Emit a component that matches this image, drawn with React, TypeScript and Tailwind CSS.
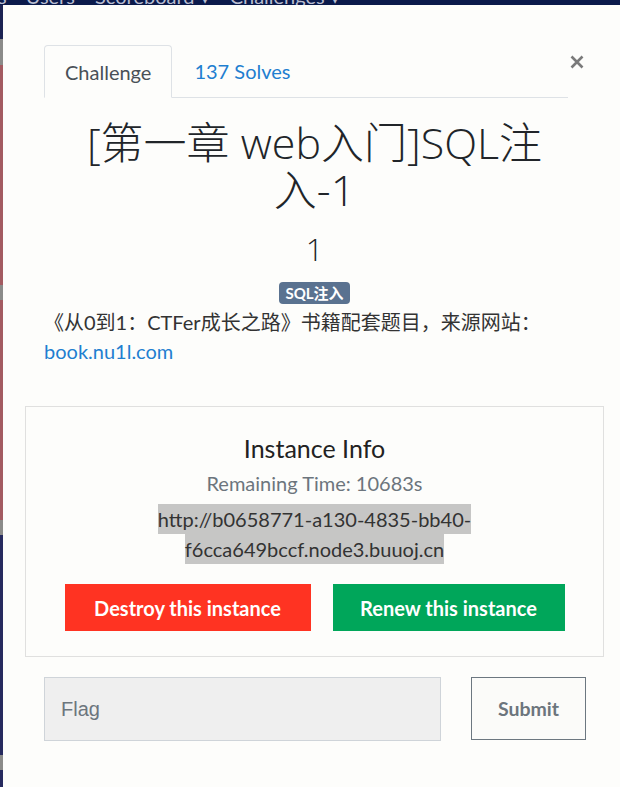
import React from "react";

export default function App() {
  const font = { fontFamily: "Lato, 'Noto Sans CJK SC', sans-serif" };
  const head = { fontFamily: "'Open Sans', 'Noto Sans CJK SC', sans-serif" };
  return (
    <div
      className="w-[620px] h-[787px] flex flex-col bg-[#0b1a4b] overflow-hidden"
      style={font}
    >
      {/* background navbar (mostly covered) */}
      <div className="h-[5px] overflow-hidden shrink-0">
        <div className="-mt-[14px] flex text-[20px] leading-[20px] text-[#b8bdd0] whitespace-nowrap">
          <span className="-ml-[2px]">s</span>
          <span className="ml-[19px]">Users</span>
          <span className="ml-[20px]">Scoreboard ▾</span>
          <span className="ml-[20px]">Challenges ▾</span>
        </div>
      </div>
      <div className="flex flex-1">
        {/* background page strip */}
        <div className="w-[3px] flex flex-col shrink-0">
          <div className="h-[34px] bg-[#1c2352]" />
          <div className="h-[26px] bg-[#8b8b89]" />
          <div className="h-[220px] bg-[#a35b61]" />
          <div className="h-[15px] bg-[#8b8b89]" />
          <div className="h-[220px] bg-[#a35b61]" />
          <div className="h-[15px] bg-[#8b8b89]" />
          <div className="h-[220px] bg-[#262a5e]" />
          <div className="h-[15px] bg-[#8b8b89]" />
          <div className="flex-1 bg-[#262a5e]" />
        </div>
        {/* modal */}
        <div className="flex-1 bg-[#fdfdfb] relative">
          <button className="absolute left-[567px] top-[50px] w-[14px] h-[14px] text-[#7a7a7a]">
            <svg viewBox="0 0 14 14" width="14" height="14">
              <path d="M1.5 1.5 L12.5 12.5 M12.5 1.5 L1.5 12.5" stroke="currentColor" strokeWidth="2.6" />
            </svg>
          </button>
          <div className="pt-[40px] pl-[22px] w-[601px]">
            {/* tabs */}
            <div className="ml-[19px] w-[524px] flex border-b border-[#dee2e6] text-[20px]">
              <div className="-mb-px h-[53px] px-[20px] flex items-center border border-[#dee2e6] border-b-[#fdfdfb] rounded-t-[4px] bg-[#fdfdfb] text-[#495057]">
                Challenge
              </div>
              <div className="h-[52px] pl-[22px] flex items-center text-[#1f7fd0]">
                137 Solves
              </div>
            </div>

            <div className="w-[579px]">
              {/* title */}
              <h2
                className="mt-[21px] px-[52px] text-center text-[43px] leading-[47px] text-[#212529] font-light"
                style={head}
              >
                [第一章 web入门]SQL注入-1
              </h2>
              <div
                className="mt-[18px] text-center text-[31px] leading-[37px] text-[#212529] font-light"
                style={head}
              >
                1
              </div>
              <div className="mt-[14px] flex justify-center">
                <span className="h-[22px] px-[6px] rounded-[4px] bg-[#5a7290] text-white text-[15px] font-bold leading-[22px]">
                  SQL注入
                </span>
              </div>
              <p className="mt-[4px] ml-[19px] mr-[10px] text-[20px] leading-[29px] text-[#333]">
                《从0到1：CTFer成长之路》书籍配套题目，来源网站：
                <span className="text-[#1f7fd0]">book.nu1l.com</span>
              </p>

              {/* instance box */}
              <div className="mt-[40px] h-[251px] border border-[#e0e0df] pt-[27px] flex flex-col items-center text-center">
                <div className="text-[25px] leading-[28px] text-[#222]">Instance Info</div>
                <div className="mt-[7px] text-[20px] leading-[28px] text-[#6c757d]">
                  Remaining Time: 10683s
                </div>
                <div className="mt-[7px] w-[440px] text-[20px] leading-[30px] text-[#333]">
                  <span className="bg-[#c6c6c5] py-[3px] box-decoration-clone">
                    http://b0658771-a130-4835-bb40-f6cca649bccf.node3.buuoj.cn
                  </span>
                </div>
                <div className="mt-[20px] flex gap-[22px]">
                  <button className="h-[47px] w-[246px] bg-[#ff3322] text-white font-bold text-[20px]">
                    Destroy this instance
                  </button>
                  <button className="h-[47px] w-[232px] bg-[#00a65a] text-white font-bold text-[20px]">
                    Renew this instance
                  </button>
                </div>
              </div>

              {/* flag */}
              <div className="mt-[20px] ml-[19px] flex items-start">
                <div className="w-[397px] h-[64px] bg-[#efefef] border border-[#cfd4d9] flex items-center pl-[16px]">
                  <span className="text-[20px] text-[#6c757d]" style={{ fontFamily: "'Liberation Sans', Arial, sans-serif" }}>
                    Flag
                  </span>
                </div>
                <button className="ml-[30px] w-[115px] h-[63px] border border-[#6c7780] bg-[#fbfbf9] text-[#6c757d] font-bold text-[19.5px]">
                  Submit
                </button>
              </div>
            </div>
          </div>
        </div>
      </div>
    </div>
  );
}
